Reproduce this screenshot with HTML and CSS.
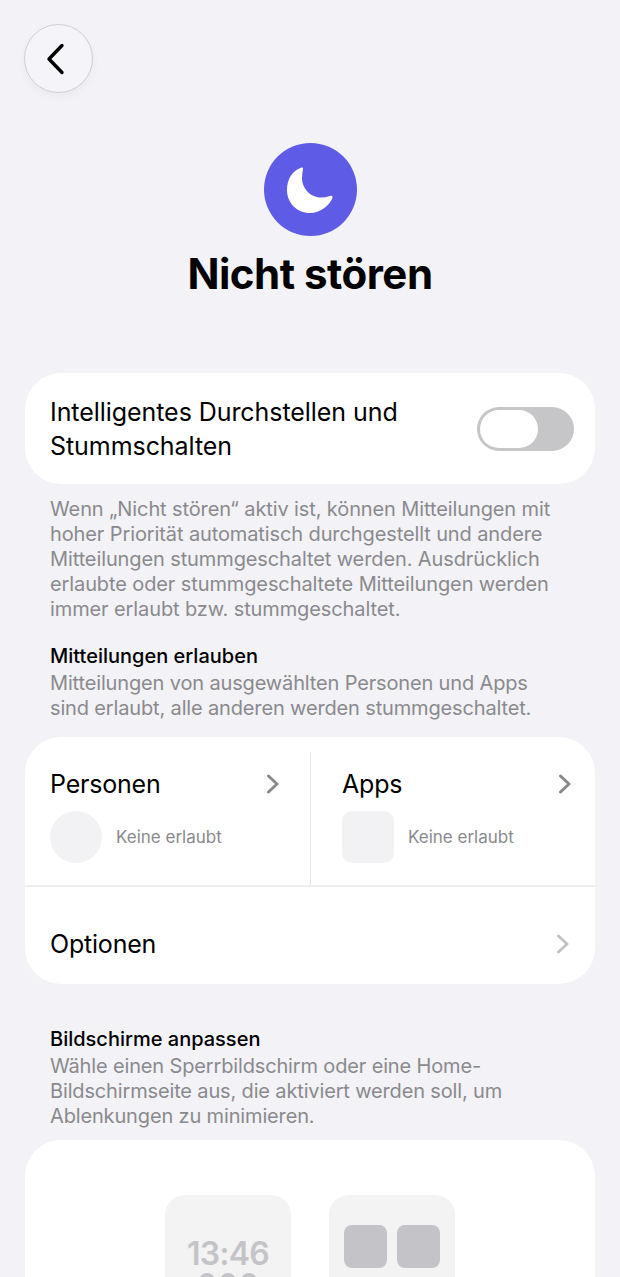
FILE: index.html
```html
<!DOCTYPE html>
<html>

	<head>
		<meta charset="utf-8">
		<title>Nicht stören</title>
		<link rel="stylesheet" href="styles.css">
	</head>

	<body>
		<div class="screen">
			<div class="back">
				<svg width="22" height="32" viewBox="0 0 22 32"><path d="M17 2.500 L4 16 L17 29.500" fill="none" stroke="#000" stroke-width="3.400" stroke-linecap="round" stroke-linejoin="round"/></svg>
			</div>

			<div class="head">
				<div class="moon_icon">
					<svg width="48" height="48" viewBox="0 0 48 48"><path d="M15.500 1.500 C6.500 4.500 1 13 1 24 C1 37 11 47 24 47 C34 47 43 40 46.500 32 C47 30.500 46 29.500 44 30 C41 31 38 31.500 35 31.500 C24 31.500 16 22 16 12 C16 9 16.500 6 17 3 C17.200 1.800 16.500 1.200 15.500 1.500 Z" fill="#fff"/></svg>
				</div>
				<h1>Nicht stören</h1>
			</div>

			<div class="card toggle_card">
				<div class="row_text">Intelligentes Durchstellen und<br>Stummschalten</div>
				<div class="toggle"><span class="knob"></span></div>
			</div>
			<p class="note first_note">Wenn „Nicht stören“ aktiv ist, können Mitteilungen mit<br>hoher Priorität automatisch durchgestellt und andere<br>Mitteilungen stummgeschaltet werden. Ausdrücklich<br>erlaubte oder stummgeschaltete Mitteilungen werden<br>immer erlaubt bzw. stummgeschaltet.</p>

			<h2>Mitteilungen erlauben</h2>
			<p class="note">Mitteilungen von ausgewählten Personen und Apps<br>sind erlaubt, alle anderen werden stummgeschaltet.</p>

			<div class="card allow_card">
				<div class="cols">
					<div class="col col_left">
						<div class="col_top">
							<span class="row_text">Personen</span>
							<svg class="chev" width="14" height="20" viewBox="0 0 14 20"><path d="M2.500 2 L11 10 L2.500 18" fill="none" stroke="#8a8a8e" stroke-width="3" stroke-linecap="round" stroke-linejoin="round"/></svg>
						</div>
						<div class="col_bottom">
							<span class="thumb thumb_round"></span>
							<span class="none_text">Keine erlaubt</span>
						</div>
					</div>
					<div class="col col_right">
						<div class="col_top">
							<span class="row_text">Apps</span>
							<svg class="chev" width="14" height="20" viewBox="0 0 14 20"><path d="M2.500 2 L11 10 L2.500 18" fill="none" stroke="#8a8a8e" stroke-width="3" stroke-linecap="round" stroke-linejoin="round"/></svg>
						</div>
						<div class="col_bottom">
							<span class="thumb"></span>
							<span class="none_text">Keine erlaubt</span>
						</div>
					</div>
				</div>
				<div class="option_row">
					<span class="row_text">Optionen</span>
					<svg class="chev" width="14" height="20" viewBox="0 0 14 20"><path d="M2.500 2 L11 10 L2.500 18" fill="none" stroke="#c4c4c7" stroke-width="3" stroke-linecap="round" stroke-linejoin="round"/></svg>
				</div>
			</div>

			<h2 class="second_head">Bildschirme anpassen</h2>
			<p class="note">Wähle einen Sperrbildschirm oder eine Home-<br>Bildschirmseite aus, die aktiviert werden soll, um<br>Ablenkungen zu minimieren.</p>

			<div class="card screens_card">
				<div class="preview">
					<div class="clock">13:46</div>
					<div class="dots"><span></span><span></span><span></span></div>
				</div>
				<div class="preview preview_home">
					<span class="tile"></span>
					<span class="tile"></span>
				</div>
			</div>
		</div>
	</body>

</html>
```

FILE: styles.css
```css
* {
	margin: 0;
	padding: 0;
	box-sizing: border-box;
}

body {
	background: #f2f2f7;
	font-family: "Inter", "Liberation Sans", sans-serif;
	color: #000;
}

.screen {
	width: 620px;
	height: 1277px;
	overflow: hidden;
	padding: 24px 25px 0;
}

.back {
	width: 69px;
	height: 69px;
	margin-left: -1px;
	border-radius: 50%;
	border: 1px solid #cfcfd3;
	background: #f5f5f9;
	box-shadow: 0 4px 10px rgba(0, 0, 0, 0.04);
	display: flex;
	align-items: center;
	justify-content: center;
}

.back svg {
	margin-right: 5px;
}

.head {
	display: flex;
	flex-direction: column;
	align-items: center;
	margin-top: 50px;
}

.moon_icon {
	width: 93px;
	height: 93px;
	border-radius: 50%;
	background: #5e5ce6;
	display: flex;
	align-items: center;
	justify-content: center;
}

h1 {
	font-size: 42px;
	line-height: 50px;
	font-weight: 700;
	letter-spacing: -0.5px;
	margin-top: 13px;
}

.card {
	background: #fff;
	border-radius: 36px;
}

.toggle_card {
	margin-top: 74px;
	height: 111px;
	padding: 22px 21px 0 25px;
	display: flex;
	justify-content: space-between;
	align-items: flex-start;
}

.row_text {
	font-size: 25px;
	line-height: 34px;
	letter-spacing: -0.2px;
}

.toggle_card .row_text {
	letter-spacing: -0.06px;
}

.toggle {
	width: 97px;
	height: 44px;
	margin-top: 12px;
	border-radius: 22px;
	background: #c6c6c8;
	padding: 3px;
}

.knob {
	display: block;
	width: 58px;
	height: 38px;
	border-radius: 19px;
	background: #fff;
}

.note {
	font-size: 20px;
	line-height: 25px;
	letter-spacing: -0.15px;
	color: #8a8a8e;
	padding-left: 25px;
	white-space: nowrap;
}

.first_note {
	margin-top: 13px;
	letter-spacing: -0.11px;
}

h2 {
	font-size: 20px;
	line-height: 25px;
	font-weight: 500;
	padding-left: 25px;
	margin-top: 22px;
	margin-bottom: 2px;
}

.allow_card {
	margin-top: 16px;
	height: 247px;
	overflow: hidden;
}

.cols {
	display: flex;
	height: 150px;
	border-bottom: 2px solid #eeeeef;
}

.col {
	width: 50%;
	margin-top: 15px;
	padding-top: 15px;
}

.col_left {
	width: 286px;
	padding-left: 25px;
	padding-right: 30px;
	border-right: 1px solid #e4e4e6;
}

.col_right {
	width: 284px;
	padding-left: 31px;
	padding-right: 23px;
}

.col_top {
	display: flex;
	justify-content: space-between;
	align-items: center;
	height: 34px;
}

.col_bottom {
	display: flex;
	align-items: center;
	gap: 14px;
	margin-top: 10px;
}

.thumb {
	width: 52px;
	height: 52px;
	border-radius: 10px;
	background: #f2f2f5;
}

.thumb_round {
	border-radius: 50%;
}

.none_text {
	font-size: 17px;
	color: #8a8a8e;
}

.option_row {
	display: flex;
	justify-content: space-between;
	align-items: center;
	padding: 18px 25px 0;
	height: 95px;
}

.second_head {
	margin-top: 43px;
	margin-bottom: 2px;
}

.screens_card {
	margin-top: 11px;
	height: 300px;
	padding-top: 55px;
	display: flex;
	justify-content: center;
	gap: 38px;
}

.preview {
	width: 126px;
	height: 200px;
	border-radius: 20px;
	background: #f3f3f4;
	display: flex;
	flex-direction: column;
	align-items: center;
	padding-top: 41px;
}

.clock {
	font-size: 32px;
	line-height: 36px;
	font-weight: 600;
	letter-spacing: -0.8px;
	color: #c4c4c8;
}

.dots {
	display: flex;
	gap: 5px;
	margin-top: 1px;
}

.dots span {
	width: 16px;
	height: 16px;
	border-radius: 50%;
	background: #c4c4c8;
}

.preview_home {
	flex-direction: row;
	align-items: flex-start;
	justify-content: center;
	gap: 10px;
	padding-top: 30px;
}

.tile {
	width: 43px;
	height: 43px;
	border-radius: 8px;
	background: #c4c4c8;
}
```
